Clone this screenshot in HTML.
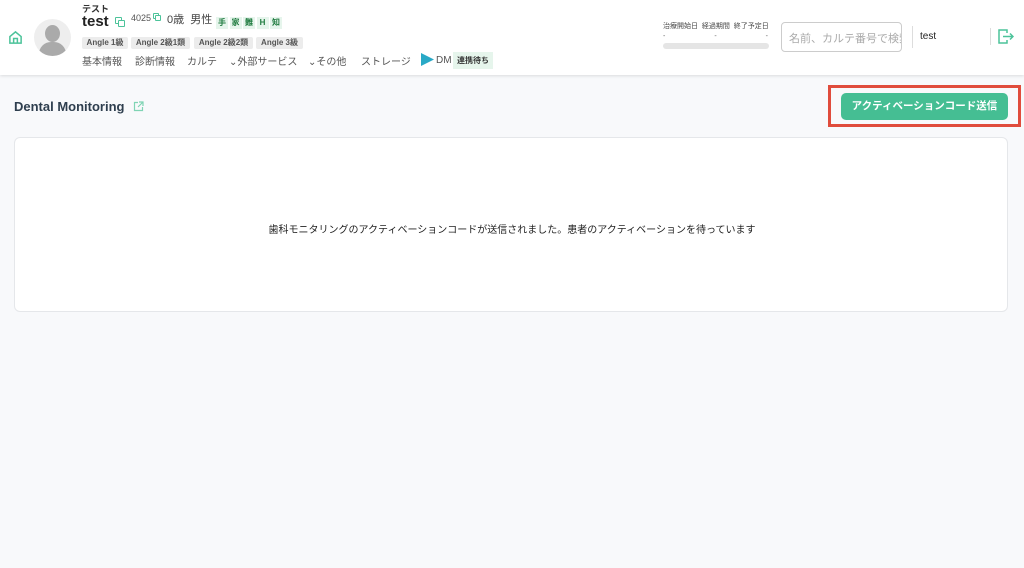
<!DOCTYPE html>
<html><head><meta charset="utf-8"><style>
*{box-sizing:border-box;margin:0;padding:0}
body{width:1024px;height:568px;background:#f8f9fb;font-family:"Liberation Sans","Noto Sans CJK JP",sans-serif;color:#333;position:relative;overflow:hidden}
.hdr{position:absolute;left:0;top:0;width:1024px;height:75px;background:#fff;box-shadow:0 1px 3px rgba(0,0,0,.12)}
.a{position:absolute;white-space:nowrap}
.tag{position:absolute;top:37px;height:12px;background:#ececec;color:#555;font-size:8px;font-weight:bold;line-height:12px;text-align:center;border-radius:2px}
.gt{display:inline-block;width:12px;height:12px;text-align:center;line-height:12px;background:#e6f5ec;color:#1e7a3e;font-size:8px;font-weight:bold;margin-right:1.5px}
.nv{position:absolute;top:53px;font-size:10px;color:#555;white-space:nowrap}
.cp{position:absolute;width:7px;height:7px;border:1.2px solid #4cc39a;border-radius:1px;background:#fff}
</style></head><body>
<div class="hdr">
<svg class="a" style="left:8px;top:30px" width="15" height="15" viewBox="0 0 16 16" fill="none" stroke="#4cc39a" stroke-width="1.6"><path d="M2 7L8 2l6 5v7H2z"/><path d="M6 14V9h4v5"/></svg>
<div class="a" style="left:34px;top:19px;width:37px;height:37px;border-radius:50%;background:#eee;overflow:hidden"><div style="position:absolute;left:11px;top:6px;width:15px;height:17px;border-radius:50%;background:#aaa"></div><div style="position:absolute;left:5px;top:23px;width:27px;height:20px;border-radius:12px 12px 0 0;background:#aaa"></div></div>
<div class="a" style="left:82px;top:2px;font-size:9px;font-weight:bold">テスト</div>
<div class="a" style="left:82px;top:13px;font-size:15px;font-weight:bold;color:#222">test</div>
<div class="cp" style="left:115px;top:17px"></div><div class="cp" style="left:118px;top:20px"></div>
<div class="a" style="left:131px;top:13px;font-size:9px;color:#555">4025</div>
<div class="cp" style="left:153px;top:13px;width:6px;height:6px"></div><div class="cp" style="left:155px;top:15px;width:6px;height:6px"></div>
<div class="a" style="left:167px;top:11px;font-size:11px;color:#444">0歳 &nbsp;男性</div>
<div class="a" style="left:216px;top:12px"><span class="gt">手</span><span class="gt">家</span><span class="gt">難</span><span class="gt">H</span><span class="gt">知</span></div>
<div class="tag" style="left:82px;width:46px">Angle 1級</div>
<div class="tag" style="left:131px;width:59px">Angle 2級1類</div>
<div class="tag" style="left:194px;width:59px">Angle 2級2類</div>
<div class="tag" style="left:256px;width:47px">Angle 3級</div>
<div class="nv" style="left:82px">基本情報</div>
<div class="nv" style="left:135px">診断情報</div>
<div class="nv" style="left:187px">カルテ</div>
<div class="nv" style="left:229px">⌄外部サービス</div>
<div class="nv" style="left:308px">⌄その他</div>
<div class="nv" style="left:361px">ストレージ</div>
<svg class="a" style="left:421px;top:53px" width="13" height="13"><path d="M0 0L13 6.5L0 13z" fill="#29a9c6"/></svg>
<div class="a" style="left:436px;top:55px;font-size:10px;color:#555">DM</div>
<div class="a" style="left:453px;top:52px;background:#e6f5ec;font-size:8px;font-weight:bold;padding:3px 4px;color:#333">連携待ち</div>
<div class="a" style="left:663px;top:21px;font-size:7px;color:#444">治療開始日 &nbsp;経過期間 &nbsp;終了予定日</div>
<div class="a" style="left:663px;top:33px;font-size:7px;width:105px;display:flex;justify-content:space-between;color:#666"><span>-</span><span>-</span><span>-</span></div>
<div class="a" style="left:663px;top:43px;width:106px;height:6px;border-radius:3px;background:#e5e5e5"></div>
<div class="a" style="left:781px;top:22px;width:121px;height:30px;border:1px solid #ccc;border-radius:4px;font-size:11px;color:#aaa;padding:7px 7px;overflow:hidden">名前、カルテ番号で検索</div>
<div class="a" style="left:912px;top:26px;width:1px;height:22px;background:#ddd"></div>
<div class="a" style="left:920px;top:31px;font-size:10px;color:#222">test</div>
<div class="a" style="left:990px;top:28px;width:1px;height:17px;background:#ddd"></div>
<svg class="a" style="left:997px;top:28px" width="17" height="17" viewBox="0 0 17 17" fill="none" stroke="#4cc39a" stroke-width="1.5"><path d="M10 5V2H2v13h8v-3"/><path d="M6 8.5h10M13 5.5l3 3-3 3"/></svg>
</div>
<div class="a" style="left:14px;top:99px;font-size:13px;font-weight:bold;color:#2e3e4e">Dental Monitoring</div>
<svg class="a" style="left:133px;top:101px" width="11" height="11" viewBox="0 0 11 11" fill="none" stroke="#7fd4b4" stroke-width="1.2"><path d="M5 1.5H1.5v8h8V6"/><path d="M6 1h4v4M10 1L5 6"/></svg>
<div class="a" style="left:828px;top:85px;width:193px;height:42px;border:3px solid #e04c3c"></div>
<div class="a" style="left:841px;top:93px;width:167px;height:27px;border-radius:5px;background:#45be93;color:#fff;font-size:10.5px;font-weight:bold;text-align:center;line-height:27px">アクティベーションコード送信</div>
<div class="a" style="left:14px;top:137px;width:994px;height:175px;background:#fff;border:1px solid #e5e7ea;border-radius:6px"></div>
<div class="a" style="left:0;width:1024px;top:221px;text-align:center;font-size:10px;color:#222">歯科モニタリングのアクティベーションコードが送信されました。患者のアクティベーションを待っています</div>
</body></html>
